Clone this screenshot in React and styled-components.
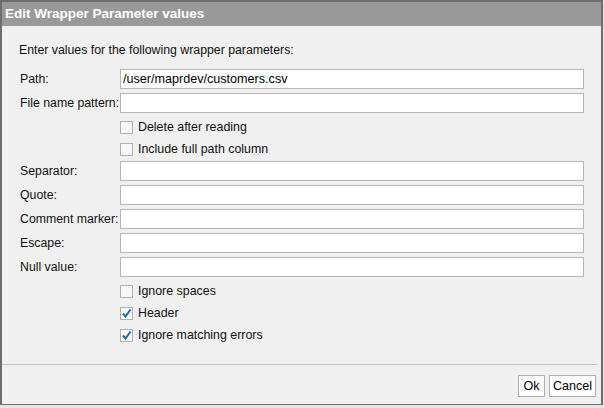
import React from 'react'
import styled, { createGlobalStyle } from 'styled-components'

const GlobalStyle = createGlobalStyle`
  html, body {
    margin: 0;
    padding: 0;
    background: #e6e6e6;
    font-family: "Liberation Sans", Arial, sans-serif;
  }
`

const Dialog = styled.div`
  width: 603px;
  height: 405px;
  box-sizing: border-box;
  border: 2px solid #6e6e6e;
  border-bottom-width: 1px;
  background: #f0f0f0;
  display: flex;
  flex-direction: column;
`

const TitleBar = styled.div`
  height: 24px;
  background: #999999;
  color: #fff;
  font-weight: bold;
  font-size: 13.5px;
  line-height: 24px;
  padding-left: 3px;
  flex-shrink: 0;
`

const Body = styled.div`
  flex: 1;
  padding: 17px 17px 0 16px;
  display: flex;
  flex-direction: column;
`

const Intro = styled.p`
  margin: 0 0 10px 1px;
  font-size: 12.3px;
  line-height: 14px;
  color: #111;
`

const Row = styled.div`
  display: grid;
  grid-template-columns: 102px 1fr;
  align-items: center;
  height: ${p => (p.$check ? 22 : 24)}px;
`

const Label = styled.label`
  font-size: 12.3px;
  color: #111;
  padding-left: 2px;
  white-space: nowrap;
`

const TextInput = styled.input`
  all: unset;
  box-sizing: border-box;
  height: 20px;
  background: #fff;
  border: 1px solid #b6b6b6;
  padding: 0 2px;
  font-family: "Liberation Sans", Arial, sans-serif;
  font-size: 12.6px;
  color: #000;
`

const CheckLine = styled.label`
  grid-column: 2;
  display: flex;
  align-items: center;
  gap: 5px;
  font-size: 12.4px;
  color: #111;
  padding-top: 2px;
`

const Box = styled.span`
  width: 13px;
  height: 13px;
  box-sizing: border-box;
  border: 1px solid #b0b0b0;
  background: #f7f7f7;
  display: inline-flex;
  align-items: center;
  justify-content: center;
`

const Divider = styled.div`
  height: 1px;
  background: #c6c6c6;
  margin-right: 4px;
  flex-shrink: 0;
`

const Footer = styled.div`
  height: 39px;
  display: flex;
  justify-content: flex-end;
  align-items: flex-start;
  gap: 4px;
  padding: 10px 5px 0 0;
  box-sizing: border-box;
  flex-shrink: 0;
`

const Button = styled.button`
  all: unset;
  box-sizing: border-box;
  height: 22px;
  width: ${p => p.$w}px;
  text-align: center;
  background: #fff;
  border: 1px solid #adadad;
  font-family: "Liberation Sans", Arial, sans-serif;
  font-size: 12.6px;
  line-height: 20px;
  color: #000;
  cursor: pointer;
`

const Checkbox = ({ checked, children }) => (
  <CheckLine>
    <Box>
      {checked && (
        <svg width='11' height='11' viewBox='0 0 11 11'>
          <path d='M2 5.5 L4.5 8.5 L9.5 1.5' fill='none' stroke='#1f6bab' strokeWidth='2' />
        </svg>
      )}
    </Box>
    {children}
  </CheckLine>
)

const Field = ({ label, value }) => (
  <Row>
    <Label>{label}</Label>
    <TextInput type='text' defaultValue={value} />
  </Row>
)

const App = () => (
  <>
    <GlobalStyle />
    <Dialog>
      <TitleBar>Edit Wrapper Parameter values</TitleBar>
      <Body>
        <Intro>Enter values for the following wrapper parameters:</Intro>
        <Field label='Path:' value='/user/maprdev/customers.csv' />
        <Field label='File name pattern:' />
        <Row $check><Checkbox>Delete after reading</Checkbox></Row>
        <Row $check><Checkbox>Include full path column</Checkbox></Row>
        <Field label='Separator:' />
        <Field label='Quote:' />
        <Field label='Comment marker:' />
        <Field label='Escape:' />
        <Field label='Null value:' />
        <Row $check><Checkbox>Ignore spaces</Checkbox></Row>
        <Row $check><Checkbox checked>Header</Checkbox></Row>
        <Row $check><Checkbox checked>Ignore matching errors</Checkbox></Row>
      </Body>
      <Divider />
      <Footer>
        <Button $w={27}>Ok</Button>
        <Button $w={47}>Cancel</Button>
      </Footer>
    </Dialog>
  </>
)

export default App
